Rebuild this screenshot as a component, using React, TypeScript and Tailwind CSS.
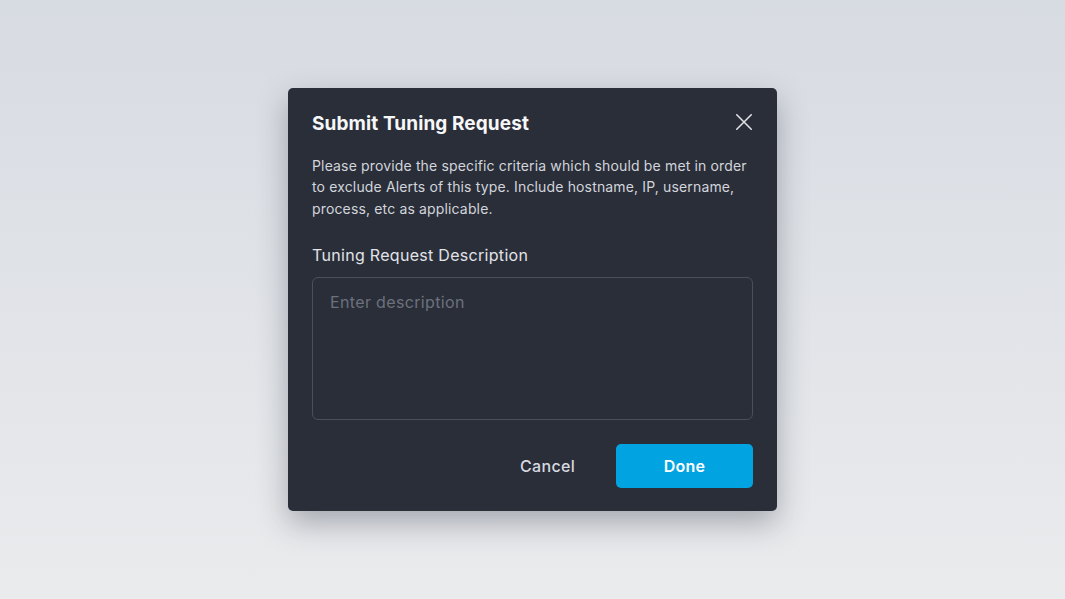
export default function App() {
  return (
    <div
      className="flex h-[599px] w-full items-center justify-center bg-gradient-to-b from-[#d7dbe2] to-[#eaebed]"
      style={{ fontFamily: 'Inter, "Noto Sans", sans-serif' }}
    >
      <div className="flex w-[489px] flex-col rounded-[5px] bg-[#2a2e38] px-6 pt-6 pb-[23px] shadow-[0_12px_30px_rgba(40,48,64,0.35)]">
        {/* Header */}
        <div className="flex h-6 items-center justify-between">
          <h2 className="text-[19px] font-bold leading-6 tracking-[0.1px] text-[#f6f7f9]">Submit Tuning Request</h2>
          <button className="flex h-[18px] w-[18px] -translate-y-[2px] items-center justify-center text-[#e2e4e8]" aria-label="Close">
            <svg width="16" height="16" viewBox="0 0 16 16" fill="none" stroke="currentColor" strokeWidth="1.5" strokeLinecap="round">
              <path d="M0.75 0.75l14.5 14.5M15.25 0.75l-14.5 14.5" />
            </svg>
          </button>
        </div>

        <p className="mt-[19px] text-[14px] leading-[21.5px] tracking-[0.15px] text-[#d2d5dc]">
          Please provide the specific criteria which should be met in order to exclude Alerts of this type. Include
          hostname, IP, username, process, etc as applicable.
        </p>

        <label className="mt-6 text-[16px] leading-6 tracking-[0.3px] text-[#e1e3e8]">Tuning Request Description</label>
        <textarea
          placeholder="Enter description"
          className="mt-[10px] h-[143px] w-full resize-none rounded-[6px] border border-[#4a4f5b] bg-transparent px-[17px] py-3 text-[16px] leading-6 tracking-[0.35px] text-[#e1e3e8] outline-none placeholder:text-[#6c717d]"
        />

        {/* Footer */}
        <div className="mt-6 flex items-center justify-end">
          <button className="mr-[21px] h-11 px-5 text-[16px] font-medium tracking-[0.3px] text-[#d7dae0]">Cancel</button>
          <button className="h-11 w-[137px] rounded-[5px] bg-[#02a3e1] text-[16px] font-semibold tracking-[0.3px] text-white">Done</button>
        </div>
      </div>
    </div>
  );
}
